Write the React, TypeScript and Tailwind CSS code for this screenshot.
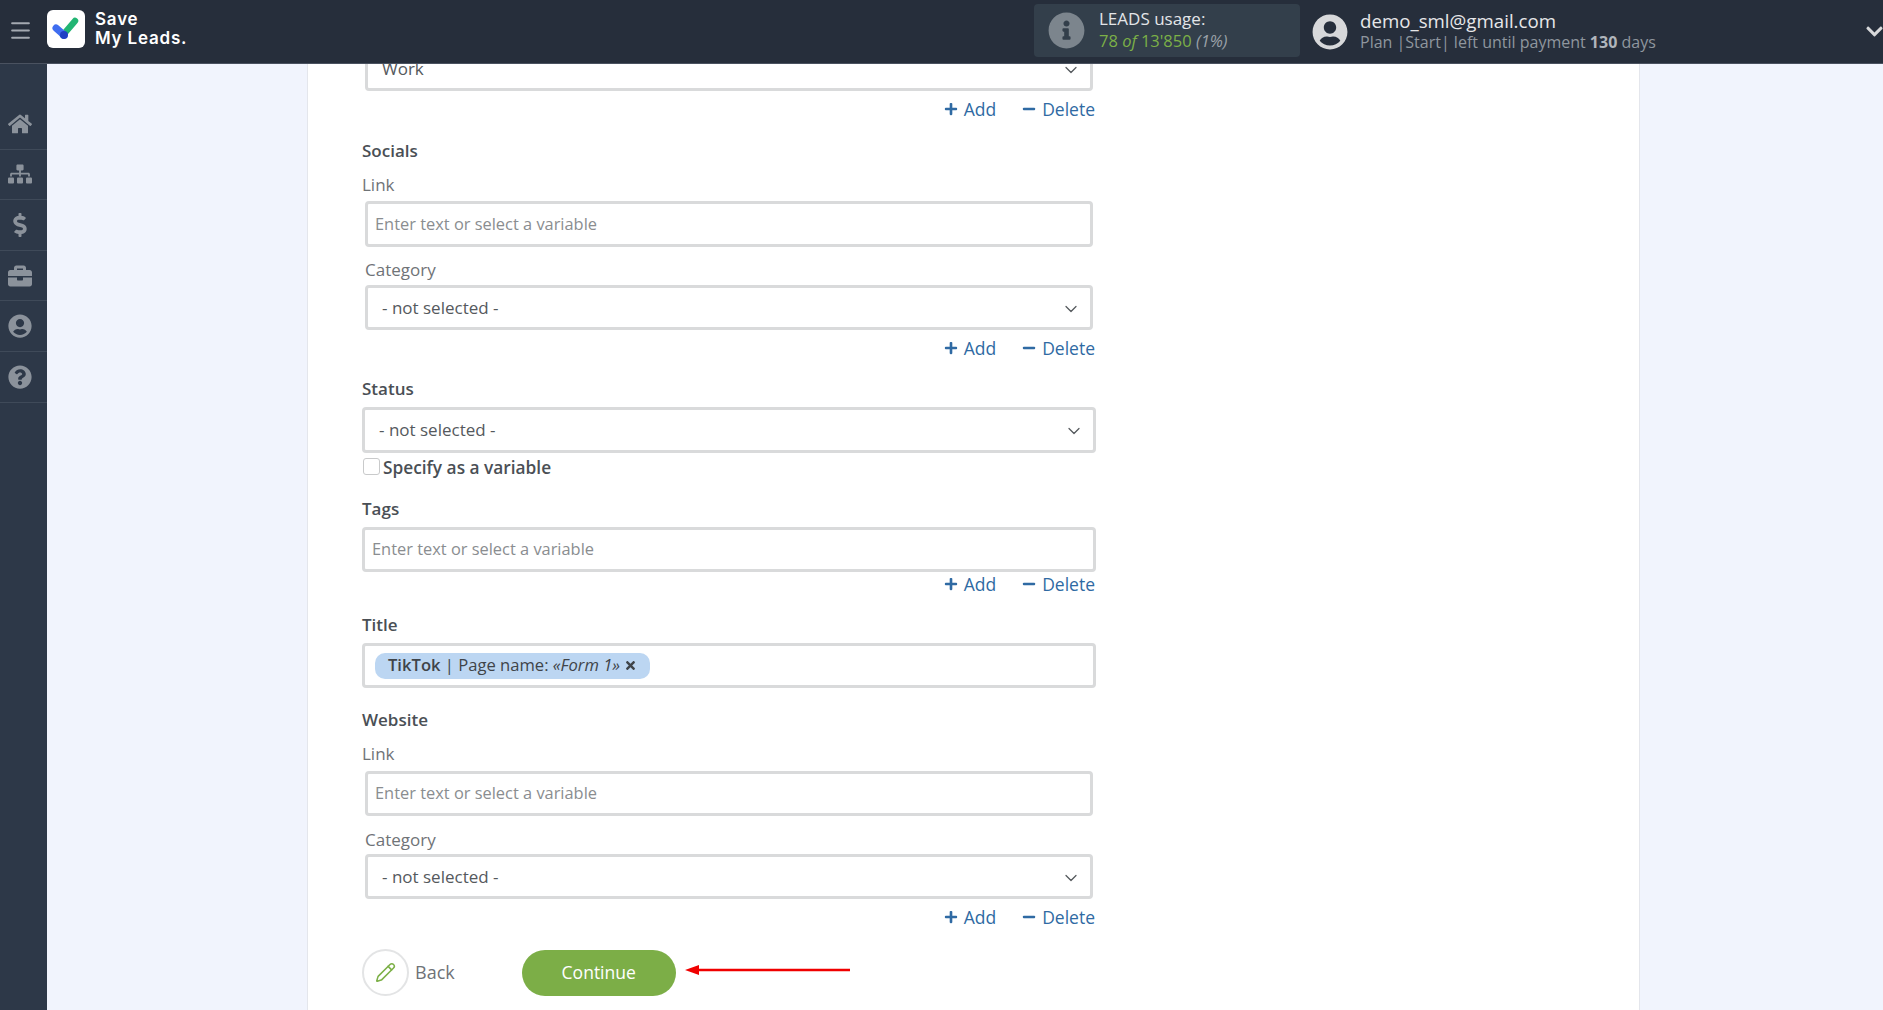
import { ChevronDown, Menu, Pencil } from "lucide-react";
import {
  FaBriefcase,
  FaChevronDown,
  FaDollarSign,
  FaHome,
  FaInfoCircle,
  FaMinus,
  FaPlus,
  FaQuestionCircle,
  FaSitemap,
  FaTimes,
  FaUserCircle,
} from "react-icons/fa";

const navItems = [FaHome, FaSitemap, FaDollarSign, FaBriefcase, FaUserCircle, FaQuestionCircle];

function Logo() {
  return (
    <div className="flex items-center gap-[10px] -mt-[5px]">
      <div className="w-[38px] h-[38px] rounded-[6px] bg-white flex items-center justify-center">
        <svg width="30" height="26" viewBox="0 0 30 26">
          <path d="M12 19 L24 5" stroke="#22b573" strokeWidth="6.5" strokeLinecap="round" />
          <path d="M5 12 L13 19" stroke="#3f6df0" strokeWidth="7" strokeLinecap="round" />
          <circle cx="13" cy="19" r="4" fill="#1f3fc4" />
        </svg>
      </div>
      <div className="font-['Inter',sans-serif] font-semibold text-[17px] leading-[19.5px] tracking-[0.8px] text-white">
        <div>Save</div>
        <div>My Leads.</div>
      </div>
    </div>
  );
}

function Header() {
  return (
    <header className="h-[64px] shrink-0 bg-[#262e3b] border-b border-[#4a5260] flex items-center text-white relative z-10">
      <div className="w-[1034px] flex items-center shrink-0">
        <div className="w-[47px] flex justify-center pr-[7px]">
          <Menu size={25} className="text-[#a4a9b1] -mt-[2px]" />
        </div>
        <Logo />
      </div>
      <div className="w-[266px] h-[53px] -mt-[2px] rounded-[4px] bg-[#333f4b] flex items-center pl-[14px] gap-[14px] shrink-0">
        <FaInfoCircle size={37} className="text-[#7c858d]" />
        <div className="text-[17px] leading-[22px] -mt-[2px]">
          <div className="text-[#e3e5e8]">LEADS usage:</div>
          <div className="text-[16.5px] text-[#7cb047]">
            78 <i>of</i> 13'850 <i className="text-[#9aa1a8]">(1%)</i>
          </div>
        </div>
      </div>
      <FaUserCircle size={36} className="ml-[12px] text-[#d7d8da] shrink-0" />
      <div className="ml-[12px] -mt-[2px] shrink-0">
        <div className="text-[18.7px] leading-[23px] text-[#e6e7e9]">demo_sml@gmail.com</div>
        <div className="text-[16px] leading-[20px] text-[#8f969e]">
          Plan |Start| left until payment <b className="text-[#b0b5bb]">130</b> days
        </div>
      </div>
      <FaChevronDown size={19} className="ml-auto -mr-[1px] -mt-[1px] text-[#d7d8da]" />
    </header>
  );
}

function Sidebar() {
  return (
    <aside className="w-[47px] shrink-0 bg-[#2d3848] pt-[35px]">
      {navItems.map((Icon, i) => (
        <div key={i} className="h-[50.6px] flex items-center justify-center pr-[7px] border-b border-[#3f4a59]">
          <Icon size={24} className="text-[#8b929b]" />
        </div>
      ))}
    </aside>
  );
}

function AddRow({ className }: { className: string }) {
  return (
    <div className={`h-[24px] flex items-center justify-end gap-[26px] pr-[1px] text-[17.5px] text-[#2f6aa3] ${className}`}>
      <span className="flex items-center gap-[6px]">
        <FaPlus size={14} /> Add
      </span>
      <span className="flex items-center gap-[6px]">
        <FaMinus size={14} /> Delete
      </span>
    </div>
  );
}

function Label({ children, bold, className }: { children: string; bold?: boolean; className: string }) {
  return (
    <div className={`h-[24px] leading-[24px] text-[17px] ${bold ? "font-semibold text-[#4a4f55]" : "text-[#6f7377]"} ${className}`}>
      {children}
    </div>
  );
}

function TextInput({ className }: { className: string }) {
  return (
    <div className={`border-[3px] border-[#d9dadb] rounded-[4px] bg-white flex items-center px-[7px] text-[16.4px] text-[#8a8d90] ${className}`}>
      Enter text or select a variable
    </div>
  );
}

function Select({ value, className }: { value: string; className: string }) {
  return (
    <div className={`border-[3px] border-[#d9dadb] rounded-[4px] bg-white flex items-center justify-between pl-[14px] pr-[9px] text-[17px] text-[#55595d] ${className}`}>
      <span>{value}</span>
      <ChevronDown size={20} strokeWidth={1.5} className="text-[#55595d] mt-[2px]" />
    </div>
  );
}

function Form() {
  return (
    <div className="w-[734px]">
      <div className="mx-[3px]">
        <Select value="Work" className="h-[45px]" />
      </div>
      <AddRow className="mt-[6px]" />

      <Label bold className="mt-[18px]">Socials</Label>
      <Label className="mt-[10px]">Link</Label>
      <div className="mx-[3px] mt-[4px]">
        <TextInput className="h-[46px]" />
        <Label className="mt-[11px]">Category</Label>
        <Select value="- not selected -" className="h-[45px] mt-[3px]" />
      </div>
      <AddRow className="mt-[6px]" />

      <Label bold className="mt-[17px]">Status</Label>
      <Select value="- not selected -" className="h-[46px] mt-[6px]" />
      <div className="h-[24px] mt-[3px] flex items-center gap-[3px] ml-[1px] text-[17.3px] font-semibold text-[#4a4f55]">
        <div className="w-[17px] h-[17px] border border-[#c9cacb] rounded-[3px] bg-white -mt-[3px]" />
        Specify as a variable
      </div>

      <Label bold className="mt-[17px]">Tags</Label>
      <TextInput className="h-[45px] mt-[6px]" />
      <AddRow className="" />

      <Label bold className="mt-[17px]">Title</Label>
      <div className="h-[45px] mt-[6px] border-[3px] border-[#d9dadb] rounded-[4px] bg-white flex items-center px-[10px]">
        <div className="h-[26px] rounded-[10px] bg-[#bcd6f2] flex items-center gap-[4px] px-[13px] text-[16.6px] text-[#3f4449]">
          <span><b className="font-semibold">TikTok</b> | Page name: <i>«Form 1»</i></span>
          <FaTimes size={13} />
        </div>
      </div>

      <Label bold className="mt-[20px]">Website</Label>
      <Label className="mt-[10px]">Link</Label>
      <div className="mx-[3px] mt-[5px]">
        <TextInput className="h-[45px]" />
        <Label className="mt-[12px]">Category</Label>
        <Select value="- not selected -" className="h-[45px] mt-[2px]" />
      </div>
      <AddRow className="mt-[6px]" />

      <div className="mt-[20px] flex items-center">
        <div className="w-[47px] h-[47px] rounded-full border-2 border-[#e3e4e5] flex items-center justify-center">
          <Pencil size={21} strokeWidth={1.75} className="text-[#7cb047]" />
        </div>
        <span className="ml-[6px] text-[18px] text-[#6f7377]">Back</span>
        <div className="ml-[67px] w-[154px] h-[46px] rounded-[23px] bg-[#7cae47] flex items-center justify-center text-[17.5px] text-white">
          Continue
        </div>
        <svg width="166" height="12" viewBox="0 0 166 12" className="ml-[9px] -mt-[6px]">
          <path d="M0 6 L14 1 L14 4.8 L165 4.8 L165 7.2 L14 7.2 L14 11 Z" fill="#f00000" />
        </svg>
      </div>
    </div>
  );
}

export default function App() {
  return (
    <div className="h-[1010px] w-[1883px] overflow-hidden flex flex-col bg-[#f1f4fd] font-['Open_Sans',sans-serif]">
      <Header />
      <div className="flex flex-1 min-h-0">
        <Sidebar />
        <main className="flex-1 pl-[260px] pr-[243px] overflow-hidden">
          <div className="bg-white border-x border-[#e4e6ec] pl-[54px] -mt-[18px] h-[1100px]">
            <Form />
          </div>
        </main>
      </div>
    </div>
  );
}
